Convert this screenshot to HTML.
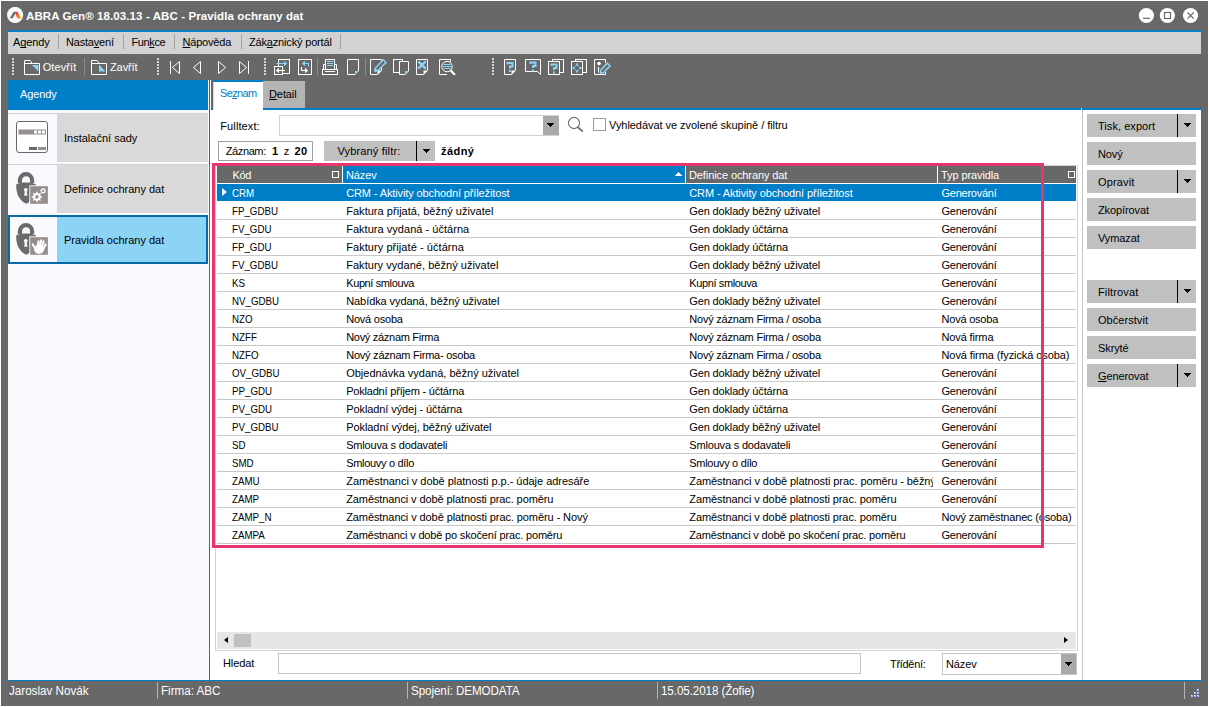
<!DOCTYPE html>
<html lang="cs">
<head>
<meta charset="utf-8">
<title>ABRA Gen - Pravidla ochrany dat</title>
<style>
html,body{margin:0;padding:0}
body{width:1209px;height:707px;background:#fff;position:relative;overflow:hidden;font-family:"Liberation Sans",sans-serif;font-size:11px;color:#000;letter-spacing:-0.1px}
div,span,svg,u{box-sizing:border-box}
#win div,#win span,#win svg{position:absolute}
#win u{position:static;text-decoration:underline;text-underline-offset:1px;text-decoration-skip-ink:none;text-decoration-thickness:1px}
#win{position:absolute;left:1px;top:1px;width:1207px;height:705px;background:#686868}
/* coordinates inside #win are page coords minus 1: use wrapper shifted */
#pg{position:absolute;left:-1px;top:-1px;width:1209px;height:707px}
.t{white-space:nowrap;line-height:14px;height:14px}
.title{left:26px;top:9px;color:#fff;font-weight:bold;font-size:11.5px;letter-spacing:0.1px}
.blue{background:#007ec7}
.menubar{left:8px;top:32px;width:1193px;height:22px;background:#d2d2d2}
.msep{top:34px;width:1px;height:15px;background:#a2a2a2}
.mi{top:35px}
.tb{color:#fff}
.grip{width:2px;height:17px;top:58px;background:repeating-linear-gradient(to bottom,#d6d6d6 0,#d6d6d6 2px,transparent 2px,transparent 3px)}
.tsep{top:58px;width:1px;height:18px;background:#8c8c8c}
.side{left:8px;top:80px;width:201px;height:600px;background:#f8f8fd}
.item{left:8px;width:200px;height:49px;background:#fafafe;border-top:1px solid #d3d3d3}
.item .lab{left:49px;top:0;width:151px;height:48px;background:#d9d9d9}
.item .tx{left:56px;top:17px;letter-spacing:0}
.item svg{left:8px;top:7px}
.item.sel{background:#0a6aa8;border:0}
.item.sel .ic{left:2px;top:2px;width:47px;height:45px;background:#fafafe}
.item.sel .lab{left:49px;top:2px;background:#8bd4f5;width:149px;height:45px}
.item.sel .tx{left:56px;top:18px}
.item.sel svg{left:8px;top:8px}
.main{left:210px;top:80px;width:991px;height:600px;background:#fff}
.btn{left:1087px;width:109px;height:23px;background:#c0c0c0}
.btn .t{left:11px;top:5px}
.btn .dv{left:90px;top:0;width:1px;height:23px;background:#000}
.arr{width:7px;height:4px;background:linear-gradient(#000,#000) 0 0/7px 1px no-repeat,linear-gradient(#000,#000) 1px 1px/5px 1px no-repeat,linear-gradient(#000,#000) 2px 2px/3px 1px no-repeat,linear-gradient(#000,#000) 3px 3px/1px 1px no-repeat}
.btn .arr{left:97px;top:9px}
.hdr{top:166px;height:17px;background:#686868;color:#fff}
.hdr .t{top:2px}
.row{left:217px;width:859px;height:18px;border-bottom:1px solid #c8c8c8}
.row span{top:2px;white-space:nowrap;line-height:14px;height:14px}
.row.sel{background:#007ec7;color:#fff;border-bottom:1px solid #fff}
.c1{left:15.3px;transform:scaleX(0.885);transform-origin:0 0;letter-spacing:0}.c2{left:129.2px}.c3{left:472.3px;width:243.7px;overflow:hidden}.c4{left:724.5px}
.st{color:#fff;font-size:12.5px;top:684px;letter-spacing:0;transform:scaleX(0.93);transform-origin:0 0}
.ssep{top:682px;width:1px;height:17px;background:#b4b4b4}
</style>
</head>
<body>
<div id="win"><div id="pg">

<!-- title bar -->
<svg style="left:7px;top:7px" width="17" height="17" viewBox="0 0 17 17">
  <defs><linearGradient id="lg" x1="0" y1="0" x2="0.6" y2="1"><stop offset="0" stop-color="#e6007e"/><stop offset="0.45" stop-color="#f15a24"/><stop offset="1" stop-color="#f7a600"/></linearGradient></defs>
  <circle cx="8.1" cy="8" r="8.1" fill="#fafafa"/>
  <polygon points="2.6,11.2 6.8,4.8 9.6,4.8 5.6,11.2" fill="#6e6e6e"/>
  <polygon points="8.4,6.4 9.6,4.8 10.4,4.8 14.2,11.6 10.4,11.6" fill="url(#lg)"/>
</svg>
<span class="t title">ABRA Gen® 18.03.13 - ABC - Pravidla ochrany dat</span>
<svg style="left:1138px;top:7px" width="62" height="17" viewBox="0 0 62 17">
  <circle cx="8.4" cy="8.5" r="7.6" fill="#fff"/>
  <circle cx="29.4" cy="8.5" r="7.6" fill="#fff"/>
  <circle cx="52.5" cy="8.5" r="7.6" fill="#fff"/>
  <rect x="5" y="10.7" width="7" height="1.2" fill="#686868"/>
  <rect x="26.5" y="5.5" width="6" height="6" fill="none" stroke="#686868" stroke-width="1.2"/>
  <path d="M49.5 5.5 L55.7 11.7 M55.7 5.5 L49.5 11.7" stroke="#686868" stroke-width="1.1" fill="none"/>
</svg>

<!-- menu -->
<div class="blue" style="left:8px;top:30px;width:1193px;height:2px"></div>
<div class="menubar"></div>
<span class="t mi" style="left:13px">A<u>g</u>endy</span>
<div class="msep" style="left:58px"></div>
<span class="t mi" style="left:66px;letter-spacing:-0.2px">Nasta<u>v</u>ení</span>
<div class="msep" style="left:123px"></div>
<span class="t mi" style="left:131.5px;letter-spacing:-0.4px">Fun<u>k</u>ce</span>
<div class="msep" style="left:174px"></div>
<span class="t mi" style="left:182.5px;letter-spacing:-0.2px"><u>N</u>ápověda</span>
<div class="msep" style="left:241px"></div>
<span class="t mi" style="left:249px;letter-spacing:-0.17px">Zák<u>a</u>znický portál</span>
<div class="msep" style="left:340px"></div>

<!-- toolbar -->
<div class="grip" style="left:12px"></div>
<svg style="left:23px;top:59px" width="18" height="17" viewBox="0 0 18 17">
  <path d="M1.5 15.5 V1.5 H7 L9.4 4.5 H16.5 V15.5 Z M1.5 4.5 H9.4" fill="none" stroke="#fff" stroke-width="1"/>
  <polygon points="9,6 15.4,6 15.4,12.4" fill="#8bd4f5"/>
</svg>
<span class="t tb" style="left:42.7px;top:60px;letter-spacing:0.1px">Otevřít</span>
<div class="tsep" style="left:84px"></div>
<svg style="left:90px;top:59px" width="18" height="17" viewBox="0 0 18 17">
  <path d="M1.5 15.5 V1.5 H7 L9.4 4.5 H16.5 V15.5 Z M1.5 4.5 H9.4" fill="none" stroke="#fff" stroke-width="1"/>
  <polygon points="9,5.5 9,12.4 15.4,12.4" fill="#8bd4f5"/>
</svg>
<span class="t tb" style="left:110px;top:60px">Zavřít</span>
<div class="grip" style="left:157px"></div>
<svg style="left:165px;top:56px" width="90" height="22" viewBox="165 56 90 22">
<path d="M170.5 61 V74 M179.5 61.5 L172.5 67.5 L179.5 73.5 Z" stroke="#fff" stroke-width="1" fill="none"/>
<path d="M200.5 61.5 L193.5 67.5 L200.5 73.5 Z" stroke="#fff" stroke-width="1" fill="none"/>
<path d="M218.5 61.5 L225.5 67.5 L218.5 73.5 Z" stroke="#fff" stroke-width="1" fill="none"/>
<path d="M239.5 61.5 L246.5 67.5 L239.5 73.5 Z M248.5 61 V74" stroke="#fff" stroke-width="1" fill="none"/>
</svg>
<div class="grip" style="left:264px"></div>
<svg style="left:270px;top:56px" width="190" height="22" viewBox="270 56 190 22">
<rect x="278.5" y="59.5" width="11" height="14" stroke="#fff" stroke-width="1" fill="none"/>
<rect x="274.5" y="66.5" width="8" height="8" stroke="#fff" fill="#686868"/>
<path d="M276.5 63.5 H285" stroke="#8bd4f5" stroke-width="1.1" fill="none"/><polygon points="284,60.8 287.2,63.5 284,66.2" fill="#8bd4f5"/>
<path d="M278 70.5 H285" stroke="#fff" stroke-width="1.1" fill="none"/><polygon points="279,67.8 275.8,70.5 279,73.2" fill="#fff"/>
<rect x="298.5" y="59.5" width="13" height="15" stroke="#fff" stroke-width="1" fill="none"/>
<path d="M308.5 66.5 V63.5 H304" stroke="#8bd4f5" stroke-width="1.1" fill="none"/><polygon points="305,60.8 301.8,63.5 305,66.2" fill="#8bd4f5"/>
<path d="M301.5 67 V70.5 H306" stroke="#fff" stroke-width="1.1" fill="none"/><polygon points="305,67.8 308.2,70.5 305,73.2" fill="#fff"/>
<rect x="317" y="58" width="1" height="18" fill="#8c8c8c"/>
<path d="M325.5 69.5 V59.5 H334.5 V69.5" stroke="#fff" stroke-width="1" fill="none"/>
<path d="M323.5 69.5 V64.5 H325.5 M334.5 64.5 H336.5 V69.5" stroke="#fff" stroke-width="1" fill="none"/>
<rect x="322.5" y="69.5" width="15" height="5" stroke="#fff" stroke-width="1" fill="none"/>
<path d="M325 71.5 H335" stroke="#fff" stroke-width="1"/>
<path d="M327 61.5 H333 M327 63.5 H333 M327 65.5 H333" stroke="#8bd4f5" stroke-width="1"/>
<path d="M355 74.5 H347.5 V59.5 H358.5 V71" stroke="#fff" stroke-width="1" fill="none"/>
<polygon points="355,71 359,71 355,75" fill="#8bd4f5"/>
<rect x="365" y="58" width="1" height="18" fill="#8c8c8c"/>
<path d="M377.5 74.5 H370.5 V59.5 H381.5 V70.5" stroke="#fff" stroke-width="1" fill="none"/>
<polygon points="377.5,70.5 382,70.5 377.5,75" fill="#fff"/>
<path d="M383.3 59.8 L386 62.5 L378 70.5 L375 71 L375.4 68 Z" stroke="#8bd4f5" stroke-width="1.5" fill="#686868"/>
<polygon points="374.6,71.4 375,67.6 378.4,71" fill="#8bd4f5"/>
<rect x="393.5" y="59.5" width="9" height="13" stroke="#fff" stroke-width="1" fill="none"/>
<path d="M405 74.5 H399.5 V61.5 H408.5 V71 Z" stroke="#fff" fill="#686868"/>
<polygon points="405,71 409,71 405,75" fill="#8bd4f5"/>
<path d="M423.5 74.5 H416.5 V59.5 H427.5 V70.5" stroke="#fff" stroke-width="1" fill="none"/>
<polygon points="423.5,70.5 428,70.5 423.5,75" fill="#fff"/>
<path d="M418.3 61.3 L425.7 68.7 M425.7 61.3 L418.3 68.7" stroke="#8bd4f5" stroke-width="2.4"/>
<path d="M447 74.5 H439.5 V59.5 H450.5 V62" stroke="#fff" stroke-width="1" fill="none"/>
<circle cx="447" cy="66.6" r="5.2" stroke="#fff" fill="#686868"/>
<path d="M443.5 64.5 H450.5 M443 66.5 H451 M443.5 68.5 H450.5" stroke="#8bd4f5" stroke-width="1"/>
<path d="M451 70.8 L454.3 74.2" stroke="#fff" stroke-width="2.2" stroke-linecap="round"/>
</svg>
<div class="grip" style="left:492px"></div>
<svg style="left:500px;top:56px" width="115" height="22" viewBox="500 56 115 22">
<path d="M511.5 74.5 H504.5 V59.5 H515.5 V70.5" stroke="#fff" stroke-width="1" fill="none"/>
<polygon points="511.5,70.5 516,70.5 511.5,75" fill="#fff"/>
<path d="M507.5 64.5 V63 H512.5 V66.5 H510 V68.5" stroke="#8bd4f5" stroke-width="2" fill="none"/><rect x="509" y="70" width="2" height="2" fill="#8bd4f5"/>
<path d="M540.5 74.5 V59.5 H525.5 V71.5 H537.5 Z" stroke="#fff" stroke-width="1" fill="none"/>
<path d="M530.5 64.0 V62.5 H535.5 V66.0 H533 V68.0" stroke="#8bd4f5" stroke-width="2" fill="none"/><rect x="532" y="69.5" width="2" height="2" fill="#8bd4f5"/>
<rect x="552.5" y="59.5" width="11" height="13" stroke="#fff" stroke-width="1" fill="none"/>
<rect x="548.5" y="61.5" width="11" height="13" stroke="#fff" fill="#686868"/>
<path d="M551.5 66.0 V64.5 H556.5 V68.0 H554 V70.0" stroke="#8bd4f5" stroke-width="2" fill="none"/><rect x="553" y="71.5" width="2" height="2" fill="#8bd4f5"/>
<rect x="575.5" y="59.5" width="11" height="13" stroke="#fff" stroke-width="1" fill="none"/>
<rect x="571.5" y="61.5" width="11" height="13" stroke="#fff" fill="#686868"/>
<path d="M577 64.5 L580.5 68 L577 71.5 L573.5 68 Z" stroke="#8bd4f5" stroke-width="0.9" fill="none"/>
<g fill="#8bd4f5"><rect x="576" y="63.5" width="2" height="2"/><rect x="576" y="70.5" width="2" height="2"/><rect x="572.5" y="67" width="2" height="2"/><rect x="579.5" y="67" width="2" height="2"/></g>
<path d="M605.5 63 V59.5 H594.5 V74.5 H605.5 V72" stroke="#fff" stroke-width="1" fill="none"/>
<circle cx="599" cy="63.6" r="1.8" fill="#fff"/>
<path d="M598.5 67 V72.5" stroke="#fff" stroke-width="1.2"/>
<path d="M607.3 63.2 L610 66 L603.5 72.5 L600.5 73 L600.9 70 Z" stroke="#8bd4f5" stroke-width="1.5" fill="#686868"/>
</svg>

<!-- sidebar -->
<div class="side"></div>
<div class="blue" style="left:8px;top:80px;width:200px;height:30px"></div>
<span class="t" style="left:20px;top:87px;color:#fff">Agendy</span>

<div class="item" style="top:113px"><div class="lab"></div><span class="t tx">Instalační sady</span>
  <svg width="33" height="33" viewBox="0 0 33 33">
    <rect x="0.5" y="0.5" width="31" height="31" rx="2.5" fill="#fff" stroke="#6b6566"/>
    <rect x="2.5" y="8.5" width="27.5" height="5" fill="#968d8d"/>
    <rect x="18" y="9.5" width="3" height="3" fill="#fff"/><rect x="22" y="9.5" width="3" height="3" fill="#fff"/><rect x="26" y="9.5" width="3" height="3" fill="#fff"/>
    <rect x="13" y="26" width="8" height="3" fill="#6b6b6b"/><rect x="22" y="26" width="8" height="3" fill="#968d8d"/>
  </svg>
</div>
<div class="item" style="top:164px"><div class="lab"></div><span class="t tx">Definice ochrany dat</span>
  <svg width="33" height="33" viewBox="0 0 33 33"><path d="M3.9 11 V8.3 A6.1 6.1 0 0 1 16.1 8.3 V11" stroke="#6b6b6b" stroke-width="4.2" fill="none"/>
<path d="M0.3 12.2 C5 9.8 14.5 9.8 19.8 12.2 C20 22 16 29 10.3 31.8 C2.5 28.5 -0.3 20 0.3 12.2 Z" fill="#6b6b6b"/>
<circle cx="9.8" cy="17.8" r="1.9" fill="#fafafa"/>
<polygon points="8.9,18.5 10.7,18.5 11.4,23.7 8.2,23.7" fill="#fafafa"/>
<rect x="13.3" y="13.3" width="19" height="19" fill="#fafafc"/>
<rect x="14.2" y="14.2" width="17.7" height="17.6" fill="#968d8d"/><path d="M26.05 24.17 L26.05 25.63 L24.74 25.57 L24.09 27.14 L25.06 28.02 L24.02 29.06 L23.14 28.09 L21.57 28.74 L21.63 30.05 L20.17 30.05 L20.23 28.74 L18.66 28.09 L17.78 29.06 L16.74 28.02 L17.71 27.14 L17.06 25.57 L15.75 25.63 L15.75 24.17 L17.06 24.23 L17.71 22.66 L16.74 21.78 L17.78 20.74 L18.66 21.71 L20.23 21.06 L20.17 19.75 L21.63 19.75 L21.57 21.06 L23.14 21.71 L24.02 20.74 L25.06 21.78 L24.09 22.66 L24.74 24.23 Z" fill="#fff"/><circle cx="20.9" cy="24.9" r="1.8" fill="#968d8d"/><path d="M30.07 18.48 L30.07 19.32 L29.46 19.31 L29.06 20.28 L29.50 20.70 L28.90 21.30 L28.48 20.86 L27.51 21.26 L27.52 21.87 L26.68 21.87 L26.69 21.26 L25.72 20.86 L25.30 21.30 L24.70 20.70 L25.14 20.28 L24.74 19.31 L24.13 19.32 L24.13 18.48 L24.74 18.49 L25.14 17.52 L24.70 17.10 L25.30 16.50 L25.72 16.94 L26.69 16.54 L26.68 15.93 L27.52 15.93 L27.51 16.54 L28.48 16.94 L28.90 16.50 L29.50 17.10 L29.06 17.52 L29.46 18.49 Z" fill="#fff"/><circle cx="27.1" cy="18.9" r="1.2" fill="#968d8d"/></svg>
</div>
<div class="item sel" style="top:215px"><div class="ic"></div><div class="lab"></div><span class="t tx">Pravidla ochrany dat</span>
  <svg width="33" height="33" viewBox="0 0 33 33"><path d="M3.9 11 V8.3 A6.1 6.1 0 0 1 16.1 8.3 V11" stroke="#6b6b6b" stroke-width="4.2" fill="none"/>
<path d="M0.3 12.2 C5 9.8 14.5 9.8 19.8 12.2 C20 22 16 29 10.3 31.8 C2.5 28.5 -0.3 20 0.3 12.2 Z" fill="#6b6b6b"/>
<circle cx="9.8" cy="17.8" r="1.9" fill="#fafafa"/>
<polygon points="8.9,18.5 10.7,18.5 11.4,23.7 8.2,23.7" fill="#fafafa"/>
<rect x="13.3" y="13.3" width="19" height="19" fill="#fafafc"/>
<rect x="14.2" y="14.2" width="17.7" height="17.6" fill="#968d8d"/><ellipse cx="23.1" cy="26.3" rx="5" ry="4.6" fill="#fff"/>
<path d="M21.3 24.5 L22.6 18.2 M23.6 24 L25.3 17.2 M25.6 24.5 L27.7 18.4 M27 26.5 L29.6 21.4" stroke="#fff" stroke-width="2.1" stroke-linecap="round" fill="none"/>
<path d="M20.3 27.5 L16.8 21.4" stroke="#fff" stroke-width="2" stroke-linecap="round"/>
<path d="M18.5 24.5 L21 28 L22 23 Z" fill="#fff"/></svg>
</div>
<div class="blue" style="left:209px;top:80px;width:1px;height:600px"></div>

<!-- main -->
<div class="main"></div>
<div style="left:211px;top:80px;width:990px;height:28px;background:#686868"></div>
<div class="blue" style="left:211px;top:108px;width:990px;height:2px"></div>
<div style="left:213px;top:80px;width:50px;height:30px;background:#fff;border-top:2px solid #007ec7"></div>
<div style="left:213px;top:82px;width:1px;height:26px;background:#d9d9d9"></div>
<span class="t" style="left:220px;top:86px;color:#007ec7;letter-spacing:-0.65px">Se<u>z</u>nam</span>
<div style="left:263px;top:81px;width:42px;height:27px;background:#b4b4b4"></div>
<span class="t" style="left:269px;top:87px"><u>D</u>etail</span>

<span class="t" style="left:220.3px;top:119px;letter-spacing:0.1px">Fulltext:</span>
<div style="left:279px;top:115px;width:280px;height:21px;border:1px solid #d2d2d2;background:#fff"></div>
<div style="left:543px;top:116px;width:16px;height:19px;background:#a9a9a9"></div>
<div class="arr" style="left:547px;top:123px"></div>
<svg style="left:566px;top:115px" width="19" height="19" viewBox="0 0 19 19">
  <circle cx="8" cy="8" r="5.6" fill="none" stroke="#6b6b6b" stroke-width="1.1"/>
  <path d="M11.8 12.2 L16.2 16" stroke="#7a7a7a" stroke-width="2" stroke-linecap="round"/>
</svg>
<div style="left:593px;top:118px;width:13px;height:13px;border:1px solid #9c9c9c;background:#fff"></div>
<span class="t" style="left:609px;top:118px;letter-spacing:-0.05px">Vyhledávat ve zvolené skupině / filtru</span>

<div style="left:218px;top:141px;width:95px;height:20px;border:1px solid #a0a0a0;background:#fff"></div>
<span class="t" style="left:225.8px;top:144px;letter-spacing:-0.4px">Záznam:</span><span class="t" style="left:272px;top:144px;font-weight:bold">1</span><span class="t" style="left:283.8px;top:144px">z</span><span class="t" style="left:294.5px;top:144px;font-weight:bold;letter-spacing:0.5px">20</span>
<div style="left:324px;top:141px;width:111px;height:20px;background:#c0c0c0"></div>
<span class="t" style="left:337.4px;top:144px;letter-spacing:0.17px">Vybraný filtr:</span>
<div style="left:416px;top:141px;width:1px;height:20px;background:#000"></div>
<div class="arr" style="left:423px;top:149px"></div>
<span class="t" style="left:441px;top:144px;font-weight:bold;letter-spacing:0.45px">žádný</span>

<!-- grid -->
<div style="left:215px;top:165px;width:863px;height:486px;border:1px solid #d4d4d4;background:#fff"></div>
<div class="hdr" style="left:217px;width:125px"><span class="t" style="left:15.5px;letter-spacing:-0.4px">Kód</span>
  <div style="left:115px;top:5px;width:7px;height:7px;border:1px solid #fff"></div></div>
<div class="hdr" style="left:343px;width:342px;background:#007ec7"><span class="t" style="left:3px">Název</span>
  <div style="left:332px;top:6px;width:7px;height:4px;background:linear-gradient(#fff,#fff) 3px 0/1px 1px no-repeat,linear-gradient(#fff,#fff) 2px 1px/3px 1px no-repeat,linear-gradient(#fff,#fff) 1px 2px/5px 1px no-repeat,linear-gradient(#fff,#fff) 0 3px/7px 1px no-repeat"></div></div>
<div class="hdr" style="left:686px;width:251px"><span class="t" style="left:3px">Definice ochrany dat</span></div>
<div class="hdr" style="left:938px;width:138px"><span class="t" style="left:3px">Typ pravidla</span>
  <div style="left:130px;top:5px;width:7px;height:7px;border:1px solid #fff"></div></div>
<div class="row sel" style="top:184px"><span class="c1">CRM</span><span class="c2" style="letter-spacing:-0.118px">CRM - Aktivity obchodní příležitost</span><span class="c3" style="letter-spacing:-0.118px">CRM - Aktivity obchodní příležitost</span><span class="c4" style="letter-spacing:-0.248px">Generování</span></div>
<div class="row" style="top:202px"><span class="c1">FP_GDBU</span><span class="c2" style="letter-spacing:0.034px">Faktura přijatá, běžný uživatel</span><span class="c3" style="letter-spacing:-0.147px">Gen doklady běžný uživatel</span><span class="c4" style="letter-spacing:-0.248px">Generování</span></div>
<div class="row" style="top:220px"><span class="c1">FV_GDU</span><span class="c2" style="letter-spacing:0.033px">Faktura vydaná - účtárna</span><span class="c3" style="letter-spacing:-0.148px">Gen doklady účtárna</span><span class="c4" style="letter-spacing:-0.248px">Generování</span></div>
<div class="row" style="top:238px"><span class="c1">FP_GDU</span><span class="c2" style="letter-spacing:0.062px">Faktury přijaté - účtárna</span><span class="c3" style="letter-spacing:-0.148px">Gen doklady účtárna</span><span class="c4" style="letter-spacing:-0.248px">Generování</span></div>
<div class="row" style="top:256px"><span class="c1">FV_GDBU</span><span class="c2" style="letter-spacing:0.042px">Faktury vydané, běžný uživatel</span><span class="c3" style="letter-spacing:-0.147px">Gen doklady běžný uživatel</span><span class="c4" style="letter-spacing:-0.248px">Generování</span></div>
<div class="row" style="top:274px"><span class="c1">KS</span><span class="c2" style="letter-spacing:-0.382px">Kupní smlouva</span><span class="c3" style="letter-spacing:-0.382px">Kupní smlouva</span><span class="c4" style="letter-spacing:-0.248px">Generování</span></div>
<div class="row" style="top:292px"><span class="c1">NV_GDBU</span><span class="c2" style="letter-spacing:-0.074px">Nabídka vydaná, běžný uživatel</span><span class="c3" style="letter-spacing:-0.147px">Gen doklady běžný uživatel</span><span class="c4" style="letter-spacing:-0.248px">Generování</span></div>
<div class="row" style="top:310px"><span class="c1">NZO</span><span class="c2" style="letter-spacing:-0.212px">Nová osoba</span><span class="c3" style="letter-spacing:-0.217px">Nový záznam Firma / osoba</span><span class="c4" style="letter-spacing:-0.212px">Nová osoba</span></div>
<div class="row" style="top:328px"><span class="c1">NZFF</span><span class="c2" style="letter-spacing:-0.294px">Nový záznam Firma</span><span class="c3" style="letter-spacing:-0.217px">Nový záznam Firma / osoba</span><span class="c4" style="letter-spacing:-0.129px">Nová firma</span></div>
<div class="row" style="top:346px"><span class="c1">NZFO</span><span class="c2" style="letter-spacing:-0.237px">Nový záznam Firma- osoba</span><span class="c3" style="letter-spacing:-0.217px">Nový záznam Firma / osoba</span><span class="c4" style="letter-spacing:-0.093px">Nová firma (fyzická osoba)</span></div>
<div class="row" style="top:364px"><span class="c1">OV_GDBU</span><span class="c2" style="letter-spacing:-0.008px">Objednávka vydaná, běžný uživatel</span><span class="c3" style="letter-spacing:-0.147px">Gen doklady běžný uživatel</span><span class="c4" style="letter-spacing:-0.248px">Generování</span></div>
<div class="row" style="top:382px"><span class="c1">PP_GDU</span><span class="c2" style="letter-spacing:-0.200px">Pokladní příjem - účtárna</span><span class="c3" style="letter-spacing:-0.148px">Gen doklady účtárna</span><span class="c4" style="letter-spacing:-0.248px">Generování</span></div>
<div class="row" style="top:400px"><span class="c1">PV_GDU</span><span class="c2" style="letter-spacing:-0.088px">Pokladní výdej - účtárna</span><span class="c3" style="letter-spacing:-0.148px">Gen doklady účtárna</span><span class="c4" style="letter-spacing:-0.248px">Generování</span></div>
<div class="row" style="top:418px"><span class="c1">PV_GDBU</span><span class="c2" style="letter-spacing:-0.073px">Pokladní výdej, běžný uživatel</span><span class="c3" style="letter-spacing:-0.147px">Gen doklady běžný uživatel</span><span class="c4" style="letter-spacing:-0.248px">Generování</span></div>
<div class="row" style="top:436px"><span class="c1">SD</span><span class="c2" style="letter-spacing:-0.178px">Smlouva s dodavateli</span><span class="c3" style="letter-spacing:-0.178px">Smlouva s dodavateli</span><span class="c4" style="letter-spacing:-0.248px">Generování</span></div>
<div class="row" style="top:454px"><span class="c1">SMD</span><span class="c2" style="letter-spacing:-0.304px">Smlouvy o dílo</span><span class="c3" style="letter-spacing:-0.304px">Smlouvy o dílo</span><span class="c4" style="letter-spacing:-0.248px">Generování</span></div>
<div class="row" style="top:472px"><span class="c1">ZAMU</span><span class="c2" style="letter-spacing:-0.030px">Zaměstnanci v době platnosti p.p.- údaje adresáře</span><span class="c3" style="letter-spacing:-0.073px">Zaměstnanci v době platnosti prac. poměru - běžný</span><span class="c4" style="letter-spacing:-0.248px">Generování</span></div>
<div class="row" style="top:490px"><span class="c1">ZAMP</span><span class="c2" style="letter-spacing:-0.092px">Zaměstnanci v době platnosti prac. poměru</span><span class="c3" style="letter-spacing:-0.092px">Zaměstnanci v době platnosti prac. poměru</span><span class="c4" style="letter-spacing:-0.248px">Generování</span></div>
<div class="row" style="top:508px"><span class="c1">ZAMP_N</span><span class="c2" style="letter-spacing:-0.087px">Zaměstnanci v době platnosti prac. poměru - Nový</span><span class="c3" style="letter-spacing:-0.092px">Zaměstnanci v době platnosti prac. poměru</span><span class="c4" style="letter-spacing:-0.163px">Nový zaměstnanec (osoba)</span></div>
<div class="row" style="top:526px"><span class="c1">ZAMPA</span><span class="c2" style="letter-spacing:-0.169px">Zaměstnanci v době po skočení prac. poměru</span><span class="c3" style="letter-spacing:-0.169px">Zaměstnanci v době po skočení prac. poměru</span><span class="c4" style="letter-spacing:-0.248px">Generování</span></div>
<div style="left:222px;top:188px;width:0;height:0;border-top:4.5px solid transparent;border-bottom:4.5px solid transparent;border-left:5px solid #fff"></div>
<!-- hscroll -->
<div style="left:217px;top:632px;width:859px;height:17px;background:#e6e6e6"></div>
<div style="left:234px;top:634px;width:17px;height:13px;background:#c0c0c0"></div>
<div style="left:224px;top:637px;width:0;height:0;border-top:3.5px solid transparent;border-bottom:3.5px solid transparent;border-right:4px solid #000"></div>
<div style="left:1064px;top:637px;width:0;height:0;border-top:3.5px solid transparent;border-bottom:3.5px solid transparent;border-left:4px solid #000"></div>
<!-- pink highlight -->
<div style="left:212px;top:163px;width:832px;height:385px;border:3px solid #e8366c"></div>

<span class="t" style="left:223px;top:656px">Hledat</span>
<div style="left:278px;top:653px;width:583px;height:21px;border:1px solid #c4c4c4;background:#fff"></div>
<span class="t" style="left:890px;top:657px;letter-spacing:-0.3px">Třídění:</span>
<div style="left:942px;top:653px;width:135px;height:22px;border:1px solid #c4c4c4;background:#fff"></div>
<span class="t" style="left:946px;top:657px">Název</span>
<div style="left:1061px;top:654px;width:15px;height:20px;background:#a9a9a9"></div>
<div class="arr" style="left:1065px;top:662px"></div>

<!-- right panel -->
<div style="left:1082px;top:110px;width:1px;height:570px;background:#c6c6c6"></div>
<div style="left:1081px;top:108px;width:1px;height:2px;background:#fff"></div>
<div class="btn" style="top:114px"><span class="t" style="letter-spacing:0.05px">Tisk, export</span><div class="dv"></div><div class="arr"></div></div>
<div class="btn" style="top:142px"><span class="t">Nový</span></div>
<div class="btn" style="top:170px"><span class="t" style="letter-spacing:0.15px">Opravit</span><div class="dv"></div><div class="arr"></div></div>
<div class="btn" style="top:198px"><span class="t">Zkopírovat</span></div>
<div class="btn" style="top:226px"><span class="t">Vymazat</span></div>
<div class="btn" style="top:280px"><span class="t" style="letter-spacing:0.15px">Filtrovat</span><div class="dv"></div><div class="arr"></div></div>
<div class="btn" style="top:308px"><span class="t" style="letter-spacing:0.05px">Občerstvit</span></div>
<div class="btn" style="top:336px"><span class="t">Skryté</span></div>
<div class="btn" style="top:364px"><span class="t"><u>G</u>enerovat</span><div class="dv"></div><div class="arr"></div></div>

<!-- status bar -->
<div class="blue" style="left:8px;top:680px;width:1193px;height:1px"></div>
<span class="t st" style="left:8.5px">Jaroslav Novák</span>
<div class="ssep" style="left:157px"></div>
<span class="t st" style="left:161px">Firma: ABC</span>
<div class="ssep" style="left:407px"></div>
<span class="t st" style="left:410.5px;letter-spacing:-0.1px">Spojení: DEMODATA</span>
<div class="ssep" style="left:657px"></div>
<span class="t st" style="left:660.5px;letter-spacing:-0.1px">15.05.2018 (Žofie)</span>
<div class="ssep" style="left:1184px"></div>
<svg style="left:1190px;top:688px" width="10" height="10" viewBox="0 0 10 10">
  <g fill="#9db8ff"><rect x="7" y="1" width="2" height="2"/><rect x="4" y="4" width="2" height="2"/><rect x="7" y="4" width="2" height="2"/><rect x="1" y="7" width="2" height="2"/><rect x="4" y="7" width="2" height="2"/><rect x="7" y="7" width="2" height="2"/></g><g fill="#eef3ff"><rect x="7" y="1" width="1" height="1"/><rect x="4" y="4" width="1" height="1"/><rect x="7" y="4" width="1" height="1"/><rect x="1" y="7" width="1" height="1"/><rect x="4" y="7" width="1" height="1"/><rect x="7" y="7" width="1" height="1"/></g>
</svg>

</div></div>
</body>
</html>
